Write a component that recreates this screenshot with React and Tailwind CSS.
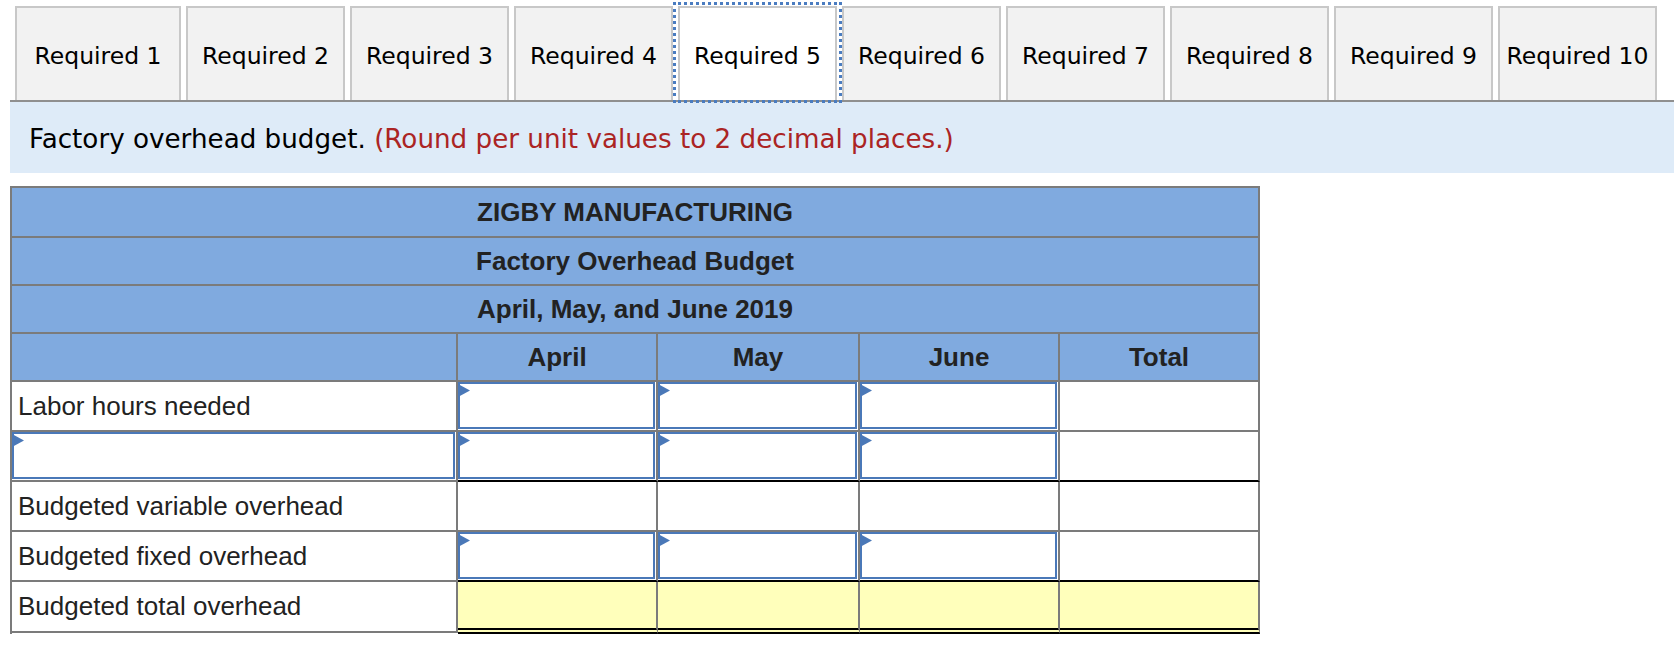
import React from "react";

const GRAY = "border-[#7b7b7b]";

function Flag() {
  return (
    <svg
      className="absolute left-[-2px] top-0"
      width="12"
      height="13"
      viewBox="0 0 12 13"
    >
      <polygon points="0,0 12,6.5 0,13" fill="#4a78b8" />
    </svg>
  );
}

function InputBox() {
  return (
    <div className="relative h-full w-full border-2 border-[#4a78b8] bg-white">
      <Flag />
    </div>
  );
}

function DataCell({ w, input, bottom = "gray", yellow }) {
  const bottomCls =
    bottom === "black"
      ? "border-b-2 border-b-black"
      : bottom === "double"
      ? "border-b-[6px] border-double border-b-black"
      : "border-b-2 border-b-[#7b7b7b]";
  return (
    <div
      className={`${w} shrink-0 border-r-2 border-r-[#7b7b7b] ${bottomCls} ${
        yellow ? "bg-[#ffffbb]" : "bg-white"
      } ${input ? "pr-[1px] pb-[1px]" : ""} ${bottom === "double" ? "h-[52px]" : "h-full"}`}
    >
      {input ? <InputBox /> : null}
    </div>
  );
}

const COLS = ["w-[200px]", "w-[202px]", "w-[200px]", "w-[200px]"];

function BodyRow({ label, labelInput, inputs, bottom, yellow, h }) {
  return (
    <div className={`flex items-start ${h}`}>
      <div
        className={`w-[446px] shrink-0 border-r-2 border-b-2 ${GRAY} bg-white flex items-center ${
          labelInput ? "pr-[1px] pb-[1px]" : "pl-[6px]"
        } ${yellow ? "h-[51px]" : "h-full"}`}
      >
        {labelInput ? <InputBox /> : <span>{label}</span>}
      </div>
      {COLS.map((w, i) => (
        <DataCell
          key={i}
          w={w}
          input={inputs && i < 3}
          bottom={bottom}
          yellow={yellow}
        />
      ))}
    </div>
  );
}

export default function App() {
  const tabs = Array.from({ length: 10 }, (_, i) => `Required ${i + 1}`);
  return (
    <div className="bg-white w-[1674px] h-[654px] overflow-hidden">
      {/* Tabs */}
      <div className="ml-[10px] pt-[6px] pl-[5px] border-b-2 border-[#8f8f8f] flex gap-[5px] font-['DejaVu_Sans',Verdana,sans-serif]">
        {tabs.map((t, i) => (
          <div
            key={t}
            className={`relative flex items-center justify-center h-[94px] pt-[5px] border-2 border-b-0 border-[#c8c8c8] text-[23.5px] text-black ${
              i === 0 ? "w-[166px]" : "w-[159px]"
            } ${i === 4 ? "bg-white" : "bg-[#f2f2f2]"}`}
          >
            {t}
            {i === 4 ? (
              <span className="absolute left-[-7px] right-[-7px] top-[-6px] bottom-[-3px] border-[3px] border-dotted border-[#4a7cc0]" />
            ) : null}
          </div>
        ))}
      </div>

      {/* Instruction band */}
      <div className="ml-[10px] h-[71px] bg-[#deebf8] flex items-center pl-[19px] pt-[4px] text-[26.2px] font-['DejaVu_Sans',Verdana,sans-serif] text-black">
        <span>
          Factory overhead budget.{" "}
          <span className="text-[#ab2424]">(Round per unit values to 2 decimal places.)</span>
        </span>
      </div>

      {/* Table */}
      <div className="ml-[10px] mt-[13px] w-[1250px] border-l-2 border-t-2 border-[#7b7b7b] font-['Liberation_Sans',Arial,sans-serif] text-[#222] text-[26px]">
        <div className="h-[50px] flex items-center justify-center bg-[#80aadf] border-r-2 border-b-2 border-[#7b7b7b] font-bold">
          ZIGBY MANUFACTURING
        </div>
        <div className="h-[48px] flex items-center justify-center bg-[#80aadf] border-r-2 border-b-2 border-[#7b7b7b] font-bold">
          Factory Overhead Budget
        </div>
        <div className="h-[48px] flex items-center justify-center bg-[#80aadf] border-r-2 border-b-2 border-[#7b7b7b] font-bold">
          April, May, and June 2019
        </div>
        <div className="h-[48px] flex bg-[#80aadf] font-bold">
          <div className="w-[446px] shrink-0 border-r-2 border-b-2 border-[#7b7b7b]" />
          {["April", "May", "June", "Total"].map((m, i) => (
            <div
              key={m}
              className={`${COLS[i]} shrink-0 flex items-center justify-center border-r-2 border-b-2 border-[#7b7b7b]`}
            >
              {m}
            </div>
          ))}
        </div>

        <BodyRow h="h-[50px]" label="Labor hours needed" inputs />
        <BodyRow h="h-[50px]" labelInput inputs bottom="black" />
        <BodyRow h="h-[50px]" label="Budgeted variable overhead" />
        <BodyRow h="h-[50px]" label="Budgeted fixed overhead" inputs bottom="black" />
        <BodyRow h="h-[52px]" label="Budgeted total overhead" bottom="double" yellow />
      </div>
    </div>
  );
}
